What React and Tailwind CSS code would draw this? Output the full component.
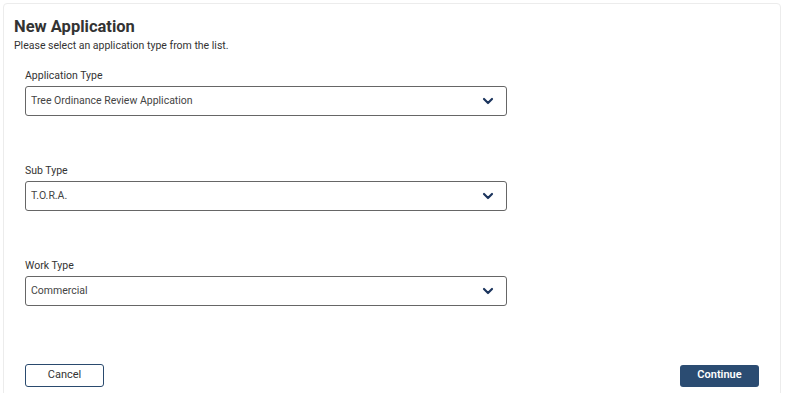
import { ChevronDown } from 'lucide-react'

const fields = [
  { label: 'Application Type', value: 'Tree Ordinance Review Application' },
  { label: 'Sub Type', value: 'T.O.R.A.' },
  { label: 'Work Type', value: 'Commercial' },
]

function SelectField({ label, value }) {
  return (
    <div className="w-[482px]">
      <div className="text-[10.5px] leading-[14px] text-[#333]">{label}</div>
      <div className="mt-[3px] h-[30px] border border-[#666] rounded-[3px] flex items-center justify-between pl-[5px] pr-[10px]">
        <span className="text-[10.5px] text-[#444]">{value}</span>
        <ChevronDown className="w-[16px] h-[16px] text-[#1c355e]" strokeWidth={3.2} />
      </div>
    </div>
  )
}

export default function App() {
  return (
    <div className="w-[786px] h-[393px] bg-white overflow-hidden pt-[3px] pl-[3px] pr-[5px]" style={{ fontFamily: 'Roboto, "Liberation Sans", sans-serif' }}>
      <div className="h-[420px] border border-[#ececec] rounded-[4px] pl-[10px] pr-[21px] pt-[13px]">
        <h1 className="text-[16.5px] leading-[20px] font-bold text-[#333]">New Application</h1>
        <p className="text-[10.5px] leading-[14px] text-[#333] mt-[2px]">Please select an application type from the list.</p>

        <div className="pl-[11px] mt-[16px] flex flex-col gap-[48px]">
          {fields.map((f) => (
            <SelectField key={f.label} label={f.label} value={f.value} />
          ))}
        </div>

        <div className="pl-[11px] mt-[58px] flex justify-between items-center">
          <button className="w-[79px] h-[23px] border border-[#2a4a6e] rounded-[3px] text-[11px] text-[#333] bg-white">
            Cancel
          </button>
          <button className="w-[79px] h-[22px] rounded-[3px] bg-[#2b4c72] text-white text-[11px] font-semibold">
            Continue
          </button>
        </div>
      </div>
    </div>
  )
}
